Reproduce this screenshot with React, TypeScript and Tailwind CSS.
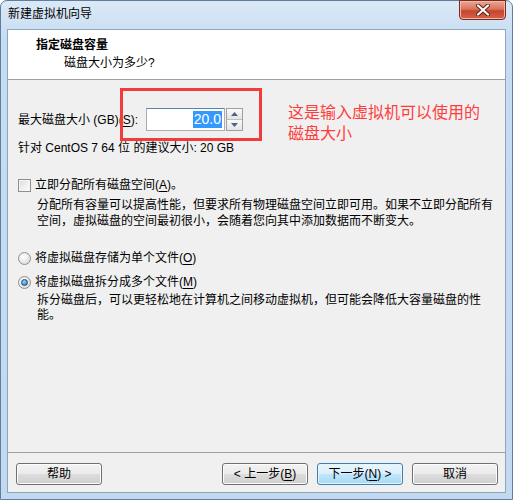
import type { ReactNode } from "react";

const FONT = '"Liberation Sans", "Noto Sans CJK SC", sans-serif';

function U({ children }: { children: ReactNode }) {
  return <span className="underline underline-offset-2">{children}</span>;
}

function Button({ children, primary }: { children: ReactNode; primary?: boolean }) {
  return (
    <button
      className={
        primary
          ? "flex h-[22px] w-[86px] items-center justify-center rounded-[3px] border border-[#3c7fb1] bg-[linear-gradient(#eaf6fd_0%,#d9f0fc_50%,#bee6fd_51%,#a7d9f5_100%)] text-[12px] leading-none text-black shadow-[inset_0_0_0_1px_#e6f4fc]"
          : "flex h-[22px] w-[86px] items-center justify-center rounded-[3px] border border-[#707070] bg-[linear-gradient(#f2f2f2_0%,#ebebeb_50%,#dddddd_51%,#cfcfcf_100%)] text-[12px] leading-none text-black shadow-[inset_0_0_0_1px_#fcfcfc]"
      }
    >
      {children}
    </button>
  );
}

function Radio({ checked }: { checked?: boolean }) {
  return (
    <span className="flex h-[13px] w-[13px] items-center justify-center rounded-full border border-[#8e8f8f] bg-[radial-gradient(circle_at_40%_35%,#ffffff,#d4d4d4)]">
      {checked && (
        <span className="h-[7px] w-[7px] rounded-full border border-[#1a4e7c] bg-[radial-gradient(circle_at_40%_35%,#9cd2f7,#1d6fb3)]" />
      )}
    </span>
  );
}

export default function App() {
  return (
    <div className="relative h-[500px] w-[513px] overflow-hidden bg-white" style={{ fontFamily: FONT }}>
      <div className="flex h-[500px] w-[513px] flex-col rounded-t-[7px] border border-[#5f7d9e] bg-[linear-gradient(180deg,#dbe9f7_0%,#c6dcf1_8%,#c3d9f0_100%)]">
        {/* title bar */}
        <div className="flex h-[28px] shrink-0 items-start justify-between">
          <span className="ml-[7px] mt-[5px] text-[12px] leading-[16px] text-black">新建虚拟机向导</span>
          <div className="mr-[6px] -mt-px flex h-[20px] w-[47px] items-center justify-center rounded-b-[4px] border border-[#7a2a1c] bg-[linear-gradient(#e9a897_0%,#d9745e_45%,#c7452e_55%,#d3634a_100%)] shadow-[inset_0_0_0_1px_#f0b9aa]">
            <svg width="14" height="12" viewBox="0 0 14 12">
              <path d="M2 1.5 L12 10.5 M12 1.5 L2 10.5" stroke="#5a1d14" strokeWidth="4" strokeLinecap="round" />
              <path d="M2 1.5 L12 10.5 M12 1.5 L2 10.5" stroke="#ffffff" strokeWidth="2.2" strokeLinecap="round" />
            </svg>
          </div>
        </div>

        {/* client */}
        <div className="mx-[6px] flex h-[464px] flex-col border border-[#8ea5be] bg-[#f0f0f0] text-[12px] text-black">
          <div className="h-[50px] shrink-0 border-b border-[#a0a0a0] bg-white pl-[28px] pt-[7px]">
            <div className="font-bold leading-[16px]">指定磁盘容量</div>
            <div className="ml-[28px] mt-[2px] leading-[16px]">磁盘大小为多少?</div>
          </div>

          <div className="flex h-[372px] flex-col pl-[10px] pr-[8px]">
            <div className="mt-[28px] flex h-[23px] items-center">
              <span className="w-[128px] leading-[16px]">
                最大磁盘大小 (GB)(<U>S</U>):
              </span>
              <div className="flex h-[23px] w-[79px] items-center justify-end border border-[#abadb3] border-t-[#5b84ad] bg-white pr-[2px]">
                <span className="bg-[#3399ff] px-px text-[14px] leading-[17px] text-white">20.0</span>
              </div>
              <div className="ml-px flex h-[23px] w-[17px] flex-col border border-[#a0a0a0] bg-[#f0f0f0]">
                <div className="flex flex-1 items-center justify-center border-b border-[#c0c0c0] bg-[linear-gradient(#fafafa,#e4e4e4)]">
                  <svg width="7" height="4" viewBox="0 0 7 4">
                    <path d="M0 4 L3.5 0 L7 4 Z" fill="#4d6185" />
                  </svg>
                </div>
                <div className="flex flex-1 items-center justify-center bg-[linear-gradient(#fafafa,#e4e4e4)]">
                  <svg width="7" height="4" viewBox="0 0 7 4">
                    <path d="M0 0 L7 0 L3.5 4 Z" fill="#4d6185" />
                  </svg>
                </div>
              </div>
            </div>
            <div className="mt-[9px] leading-[16px]">针对 CentOS 7 64 位 的建议大小: 20 GB</div>

            <div className="mt-[21px] flex items-center gap-[4px] leading-[16px]">
              <span className="h-[13px] w-[13px] border border-[#8e8f8f] bg-[linear-gradient(135deg,#dcdcdc,#ffffff)] shadow-[inset_0_0_0_1px_#f4f4f4]" />
              <span>
                立即分配所有磁盘空间(<U>A</U>)。
              </span>
            </div>
            <div className="mt-[4px] pl-[19px] leading-[16px]">
              分配所有容量可以提高性能，但要求所有物理磁盘空间立即可用。如果不立即分配所有
              <br />
              空间，虚拟磁盘的空间最初很小，会随着您向其中添加数据而不断变大。
            </div>

            <div className="mt-[21px] flex items-center gap-[4px] leading-[16px]">
              <Radio />
              <span>
                将虚拟磁盘存储为单个文件(<U>O</U>)
              </span>
            </div>
            <div className="mt-[8px] flex items-center gap-[4px] leading-[16px]">
              <Radio checked />
              <span>
                将虚拟磁盘拆分成多个文件(<U>M</U>)
              </span>
            </div>
            <div className="mt-[3px] pl-[19px] leading-[15px]">
              拆分磁盘后，可以更轻松地在计算机之间移动虚拟机，但可能会降低大容量磁盘的性
              <br />
              能。
            </div>
          </div>

          <div className="flex h-[40px] shrink-0 items-start border-t border-[#a0a0a0] pl-[8px] pr-[7px] pt-[10px]">
            <Button>帮助</Button>
            <div className="ml-auto flex gap-[9px]">
              <div className="flex gap-[9px]">
                <Button>
                  &lt; 上一步(<U>B</U>)
                </Button>
                <Button primary>
                  下一步(<U>N</U>) &gt;
                </Button>
              </div>
              <Button>取消</Button>
            </div>
          </div>
        </div>
      </div>

      {/* annotation overlay */}
      <div className="absolute left-[120px] top-[88px] h-[53px] w-[142px] border-[3px] border-[#f03c3c]" />
      <div className="absolute left-[288px] top-[102px] text-[16px] leading-[21px] text-[#ff3c3c]">
        这是输入虚拟机可以使用的
        <br />
        磁盘大小
      </div>
    </div>
  );
}
